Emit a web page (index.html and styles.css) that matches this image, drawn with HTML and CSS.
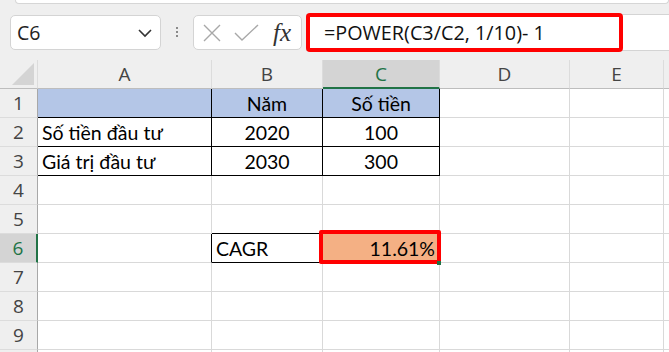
FILE: index.html
```html
<!DOCTYPE html>
<html>
<head>
    <title>CAGR</title>
    <link rel="stylesheet" href="styles.css">
</head>
<body>
    <div class="ribbon-edge"></div>

    <div class="formula-bar">
        <div class="name-box">
            <span>C6</span>
            <svg width="16" height="10" viewBox="0 0 16 10"><path d="M2 2 L8 8 L14 2" fill="none" stroke="#333" stroke-width="1.6"/></svg>
        </div>
        <div class="dots"><i></i><i></i><i></i></div>
        <div class="fx-box">
            <svg width="20" height="18" viewBox="0 0 20 18"><path d="M2 1 L18 17 M18 1 L2 17" stroke="#a8a8a8" stroke-width="1.4"/></svg>
            <svg width="26" height="18" viewBox="0 0 26 18"><path d="M1 9 L8 16 L24 1" fill="none" stroke="#a8a8a8" stroke-width="1.4"/></svg>
            <span class="fx">fx</span>
        </div>
        <div class="formula">=POWER(C3/C2, 1/10)- 1</div>
    </div>

    <div class="sheet">
        <div class="hd corner"><svg width="22" height="22" viewBox="0 0 22 22"><path d="M22 0 L22 22 L0 22 Z" fill="#d4d4d4"/></svg></div>
        <div class="hd">A</div>
        <div class="hd">B</div>
        <div class="hd sel-col">C</div>
        <div class="hd">D</div>
        <div class="hd">E</div>
        <div class="hd"></div>

        <div class="hd rh">1</div>
        <div class="cell bd blue"></div>
        <div class="cell bd blue center">Năm</div>
        <div class="cell bd blue center">Số tiền</div>
        <div class="cell"></div>
        <div class="cell"></div>
        <div class="cell"></div>

        <div class="hd rh">2</div>
        <div class="cell bd">Số tiền đầu tư</div>
        <div class="cell bd center">2020</div>
        <div class="cell bd center">100</div>
        <div class="cell"></div>
        <div class="cell"></div>
        <div class="cell"></div>

        <div class="hd rh">3</div>
        <div class="cell bd">Giá trị đầu tư</div>
        <div class="cell bd center">2030</div>
        <div class="cell bd center">300</div>
        <div class="cell"></div>
        <div class="cell"></div>
        <div class="cell"></div>

        <div class="hd rh">4</div>
        <div class="cell"></div>
        <div class="cell"></div>
        <div class="cell"></div>
        <div class="cell"></div>
        <div class="cell"></div>
        <div class="cell"></div>

        <div class="hd rh">5</div>
        <div class="cell"></div>
        <div class="cell bd-bottom"></div>
        <div class="cell"></div>
        <div class="cell"></div>
        <div class="cell"></div>
        <div class="cell"></div>

        <div class="hd rh sel-row">6</div>
        <div class="cell bd-right"></div>
        <div class="cell bd">CAGR</div>
        <div class="cell active right">11.61%</div>
        <div class="cell"></div>
        <div class="cell"></div>
        <div class="cell"></div>

        <div class="hd rh">7</div>
        <div class="cell"></div>
        <div class="cell"></div>
        <div class="cell"></div>
        <div class="cell"></div>
        <div class="cell"></div>
        <div class="cell"></div>

        <div class="hd rh">8</div>
        <div class="cell"></div>
        <div class="cell"></div>
        <div class="cell"></div>
        <div class="cell"></div>
        <div class="cell"></div>
        <div class="cell"></div>

        <div class="hd rh">9</div>
        <div class="cell"></div>
        <div class="cell"></div>
        <div class="cell"></div>
        <div class="cell"></div>
        <div class="cell"></div>
        <div class="cell"></div>

        <div class="hd rh"></div>
        <div class="cell"></div>
        <div class="cell"></div>
        <div class="cell"></div>
        <div class="cell"></div>
        <div class="cell"></div>
        <div class="cell"></div>
    </div>
</body>
</html>
```

FILE: styles.css
```css
body {
  margin: 0;
  width: 669px;
  height: 352px;
  overflow: hidden;
  background: #efefef;
  font-family: "Open Sans", sans-serif;
}

.ribbon-edge {
  margin-left: 15px;
  height: 3px;
  background: #fff;
  border: 1px solid #d6d6d6;
  border-top: none;
  border-radius: 0 0 4px 4px;
}

/* formula bar */
.formula-bar {
  display: flex;
  align-items: flex-start;
  height: 56px;
  box-sizing: border-box;
  padding: 11px 0 0 10px;
}

.name-box {
  width: 151px;
  height: 35px;
  box-sizing: border-box;
  background: #fff;
  border: 1px solid #d4d4d4;
  border-radius: 5px;
  display: flex;
  align-items: center;
  justify-content: space-between;
  padding: 0 7px 0 6px;
  font-size: 19.5px;
  color: #222;
}

.dots {
  width: 32px;
  display: flex;
  flex-direction: column;
  align-items: center;
  gap: 2px;
  padding-top: 12px;
}

.dots i {
  width: 2px;
  height: 2px;
  background: #8a8a8a;
}

.fx-box {
  width: 109px;
  height: 35px;
  box-sizing: border-box;
  background: #fff;
  border: 1px solid #d4d4d4;
  border-radius: 5px;
  display: flex;
  align-items: center;
  padding-left: 8px;
  gap: 12px;
}

.fx {
  font-family: "Liberation Serif", serif;
  font-style: italic;
  font-size: 25px;
  color: #333;
  margin-left: 1px;
  line-height: 1;
}

.formula {
  flex: 1;
  position: relative;
  margin: -1px -10px 0 4px;
  height: 37px;
  box-sizing: border-box;
  background: #fff;
  border: 1px solid #d4d4d4;
  padding-left: 17px;
  font-size: 19.8px;
  line-height: 35px;
  color: #111;
}

.formula::after {
  content: "";
  position: absolute;
  left: -1px;
  top: -2px;
  width: 317px;
  height: 39px;
  box-sizing: border-box;
  border: 4px solid #ff0000;
  border-radius: 4px;
}

/* sheet grid */
.sheet {
  display: grid;
  grid-template-columns: 38px 174px 111px 117px 130px 94px 1fr;
  grid-auto-rows: 29px;
}

.sheet > div {
  box-sizing: border-box;
  border-right: 1px solid #d9d9d9;
  border-bottom: 1px solid #d9d9d9;
}

.hd {
  background: #efefef;
  color: #444;
  font-size: 19px;
  display: flex;
  align-items: center;
  justify-content: center;
}

.sheet > .hd {
  border-right-color: #dcdcdc;
  border-bottom-color: #bdbdbd;
}

.sheet > .rh {
  border-right-color: #a8a8a8;
  border-bottom-color: #dcdcdc;
}

.corner {
  justify-content: flex-end;
  align-items: flex-end;
  padding: 0 3px 3px 0;
}

.sheet > .sel-col {
  background: #d4d4d4;
  color: #217346;
  border-bottom: 2px solid #217346;
}

.sheet > .sel-row {
  background: #d4d4d4;
  color: #217346;
  border-right: 2px solid #217346;
}

.cell {
  background: #fff;
  font-family: Lato, sans-serif;
  font-size: 19.5px;
  color: #000;
  display: flex;
  align-items: flex-end;
  padding: 0 4px 2px;
  white-space: nowrap;
  overflow: hidden;
}

.center {
  justify-content: center;
}

.right {
  justify-content: flex-end;
}

.sheet > .bd {
  border-right-color: #000;
  border-bottom-color: #000;
}

.sheet > .bd-right {
  border-right-color: #000;
}

.sheet > .bd-bottom {
  border-bottom-color: #000;
}

.blue {
  background: #b4c6e7;
}

.active {
  background: #f4b084;
  position: relative;
  overflow: visible;
}

.active::after {
  content: "";
  position: absolute;
  left: -4px;
  top: -4px;
  right: -2px;
  bottom: -2px;
  border: 4px solid #ff0000;
  border-radius: 2px;
}

.active::before {
  content: "";
  position: absolute;
  right: -2px;
  bottom: -3px;
  width: 4px;
  height: 4px;
  background: #217346;
  z-index: 1;
}
```
